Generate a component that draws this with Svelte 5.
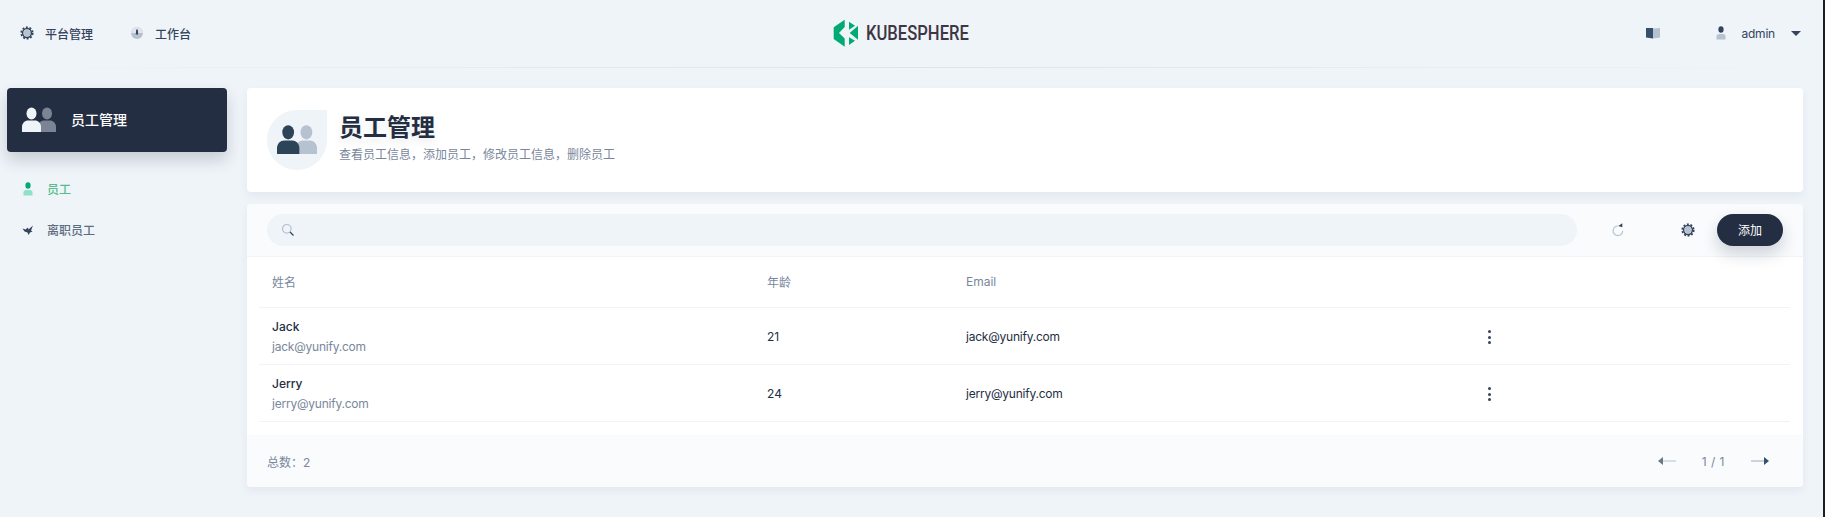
<script>
  const rows = [
    { name: 'Jack', email: 'jack@yunify.com', age: 21 },
    { name: 'Jerry', email: 'jerry@yunify.com', age: 24 },
  ]
</script>

{#snippet gear(size)}
  <svg width={size} height={size} viewBox="0 0 16 16">
    <circle cx="8" cy="8" r="3.2" fill="#b6c2d0" />
    <circle cx="8" cy="8" r="4.4" fill="none" stroke="#36435c" stroke-width="1.5" />
    <circle cx="8" cy="8" r="5.8" fill="none" stroke="#36435c" stroke-width="1.6" stroke-dasharray="2 1.64" />
  </svg>
{/snippet}

{#snippet users(size, front, back)}
  <svg width={size} height={size} viewBox="0 0 34 28">
    <ellipse cx="25" cy="7.5" rx="5" ry="6" fill={back} />
    <path d="M16 26v-5c0-4 3-6.500 6-6.500h6c3 0 6 2.500 6 6.500v5z" fill={back} />
    <ellipse cx="9.500" cy="7.500" rx="5" ry="6" fill={front} />
    <path d="M0 26v-5c0-4 3-6.500 6-6.500h7c3 0 6 2.500 6 6.500v5z" fill={front} />
  </svg>
{/snippet}

{#snippet person(head, body)}
  <svg width="12" height="14" viewBox="0 0 12 14">
    <ellipse cx="6" cy="3.500" rx="2.600" ry="3.200" fill={head} />
    <path d="M1.500 13.500v-3c0-1.600 1-2.500 2.500-2.500h4c1.500 0 2.500 .9 2.500 2.500v3z" fill={body} />
  </svg>
{/snippet}

<div class="screen">
  <div class="page">
    <header class="topbar">
      <nav class="top-links">
        <span class="top-link">
          {@render gear(16)}
          平台管理
        </span>
        <span class="top-link">
          <svg width="16" height="16" viewBox="0 0 16 16">
            <circle cx="8" cy="8" r="6" fill="#b6c2d0" />
            <path d="M2 8a6 6 0 0 1 12 0z" fill="#dfe5ec" />
            <path d="M7.200 4.500h1.600l.4 5h-2.400z" fill="#36435c" />
          </svg>
          工作台
        </span>
      </nav>
      <div class="logo">
        <svg width="25" height="28" viewBox="0 0 25 28">
          <path d="M.7 8.300 11.700 .7V8L6 14l5.700 5.500v8.200L.7 20z" fill="#00aa72" />
          <path d="M16 2.700 22 6.700l-6 4zM25 6.700 16.700 14 25 20.700zM16 18.300l6 3.400-6 4.300z" fill="#00aa72" />
        </svg>
        <span class="logo-text">KUBESPHERE</span>
      </div>
      <div class="top-right">
        <svg class="book" width="14" height="12" viewBox="0 0 14 12">
          <path d="M0 1h7v10.500L0 10.500z" fill="#36506b" />
          <path d="M7 1.500 14 1v9.500l-7 1z" fill="#b6c2d0" />
        </svg>
        <span class="user">
          {@render person('#36435c', '#b6c2d0')}
          <span>admin</span>
          <i class="caret"></i>
        </span>
      </div>
    </header>

    <div class="layout">
      <aside class="sidebar">
        <div class="side-head">
          {@render users(34, '#eff4f9', '#7b8494')}
          <span>员工管理</span>
        </div>
        <ul class="side-nav">
          <li class="active">
            {@render person('#00aa72', '#90e0c5')}
            员工
          </li>
          <li>
            <svg width="12" height="12" viewBox="0 0 12 12">
              <path d="M.5 4.500 3.500 5.500 6 3.500 6.500 5.500 11 1.500 9 6.500 10.500 7.500 8 8.500 6.500 11 5.500 8.500 2.500 7.500z" fill="#36435c" />
            </svg>
            离职员工
          </li>
        </ul>
      </aside>

      <main class="content">
        <section class="banner">
          <div class="banner-icon">{@render users(40, '#2d4358', '#b6c2d0')}</div>
          <div class="banner-text">
            <h1>员工管理</h1>
            <p>查看员工信息，添加员工，修改员工信息，删除员工</p>
          </div>
        </section>

        <section class="panel">
          <div class="toolbar">
            <div class="search">
              <svg width="14" height="14" viewBox="0 0 14 14">
                <circle cx="5.800" cy="5.800" r="4.300" fill="none" stroke="#b6c2d0" stroke-width="1.200" />
                <path d="M9 9l3.500 3.500" stroke="#36435c" stroke-width="1.300" />
              </svg>
            </div>
            <button class="icon-btn refresh" aria-label="刷新">
              <svg width="14" height="14" viewBox="0 0 14 14">
                <path d="M11.700 7.700A4.800 4.800 0 1 1 7.300 3" fill="none" stroke="#b6c2d0" stroke-width="1.200" />
                <path d="M7.300 3 11.300 .3V4.300z" fill="#36435c" />
              </svg>
            </button>
            <button class="icon-btn" aria-label="设置">{@render gear(16)}</button>
            <button class="add">添加</button>
          </div>

          <div class="table">
            <div class="tr th">
              <span>姓名</span>
              <span>年龄</span>
              <span>Email</span>
              <span></span>
            </div>
            {#each rows as row}
              <div class="tr">
                <div class="cell-name">
                  <div class="name">{row.name}</div>
                  <div class="sub email">{row.email}</div>
                </div>
                <span>{row.age}</span>
                <span class="email">{row.email}</span>
                <span class="more"><i></i><i></i><i></i></span>
              </div>
            {/each}
          </div>

          <footer class="foot">
            <span>总数：2</span>
            <div class="pager">
              <svg width="18" height="10" viewBox="0 0 18 10">
                <path d="M5 5h13" stroke="#c8d2dc" stroke-width="1.400" />
                <path d="M0 5l5-4v8z" fill="#6b7888" />
              </svg>
              <span class="pages">1 / 1</span>
              <svg width="18" height="10" viewBox="0 0 18 10">
                <path d="M0 5h13" stroke="#b6c2d0" stroke-width="1.400" />
                <path d="M18 5l-5-4v8z" fill="#36506b" />
              </svg>
            </div>
          </footer>
        </section>
      </main>
    </div>
  </div>
  <div class="edge"></div>
</div>

<style>
  :global(*, *::before, *::after) {
    box-sizing: border-box;
    margin: 0;
    padding: 0;
  }

  :global(body) {
    background: #eff4f9;
    color: #242e42;
    font-family: Inter, 'Noto Sans CJK SC', sans-serif;
    font-size: 12px;
    overflow: hidden;
  }

  .screen {
    display: flex;
    height: 517px;
  }

  .page {
    flex: 1;
    min-width: 0;
  }

  .edge {
    width: 2px;
    background: #1e1e1c;
  }

  .topbar {
    position: relative;
    display: grid;
    grid-template-columns: 1fr auto 1fr;
    align-items: center;
    height: 68px;
    padding: 0 22px 2px 19px;
  }

  .topbar::after {
    content: '';
    position: absolute;
    left: 0;
    right: 0;
    bottom: 0;
    height: 1px;
    background: linear-gradient(90deg, transparent, #dde3ea 50%, transparent);
  }

  .top-links {
    display: flex;
    gap: 36px;
  }

  .top-link {
    display: flex;
    align-items: center;
    gap: 10px;
    color: #36435c;
    font-weight: 500;
  }

  .logo {
    display: flex;
    align-items: center;
    gap: 8px;
    margin-left: -20px;
  }

  .logo-text {
    display: inline-block;
    width: 101px;
    font-family: Roboto, sans-serif;
    font-size: 20px;
    font-weight: 500;
    color: #3e3644;
    transform: scaleX(0.83);
    transform-origin: left center;
    white-space: nowrap;
  }

  .top-right {
    display: flex;
    justify-content: flex-end;
    align-items: center;
    gap: 55px;
  }

  .user {
    display: flex;
    align-items: center;
    color: #36435c;
  }

  .user span {
    margin: 0 16px 0 14px;
    letter-spacing: -0.2px;
  }

  .caret {
    border-top: 5px solid #36435c;
    border-left: 5px solid transparent;
    border-right: 5px solid transparent;
  }

  .layout {
    display: flex;
    padding-top: 20px;
  }

  .sidebar {
    flex: none;
    width: 247px;
    padding: 0 20px 0 7px;
  }

  .side-head {
    display: flex;
    align-items: center;
    gap: 15px;
    height: 64px;
    padding-left: 15px;
    background: #242e42;
    border-radius: 4px;
    box-shadow: 0 8px 16px rgba(36, 46, 66, 0.2);
    color: #fff;
    font-size: 14px;
    font-weight: 500;
  }

  .side-head span {
    padding-bottom: 2px;
  }

  .side-nav {
    list-style: none;
    margin-top: 16px;
  }

  .side-nav li {
    display: flex;
    align-items: center;
    gap: 13px;
    height: 41px;
    padding-left: 15px;
    color: #5f6c81;
    font-weight: 500;
  }

  .side-nav li.active {
    color: #55bc8a;
  }

  .content {
    flex: 1;
    min-width: 0;
    padding-right: 20px;
  }

  .banner {
    display: flex;
    align-items: center;
    gap: 12px;
    height: 104px;
    padding-left: 20px;
    background: #fff;
    border-radius: 4px;
    box-shadow: 0 4px 8px rgba(36, 46, 66, 0.06);
  }

  .banner-icon {
    display: flex;
    align-items: center;
    justify-content: center;
    width: 60px;
    height: 60px;
    background: #eff4f9;
    border-radius: 50% 0 50% 50%;
  }

  .banner-text {
    padding-bottom: 4px;
  }

  h1 {
    font-size: 24px;
    line-height: 30px;
    font-weight: 600;
    color: #242e42;
    text-shadow: 0 4px 8px rgba(36, 46, 66, 0.1);
  }

  .banner p {
    margin-top: 3px;
    line-height: 18px;
    color: #79879c;
  }

  .panel {
    margin-top: 12px;
    background: #fff;
    border-radius: 4px;
    box-shadow: 0 4px 8px rgba(36, 46, 66, 0.06);
    overflow: hidden;
  }

  .toolbar {
    display: flex;
    align-items: center;
    height: 53px;
    padding: 0 20px;
    background: #f9fbfd;
    border-bottom: 1px solid #eff4f9;
  }

  .search {
    display: flex;
    align-items: center;
    flex: none;
    width: 1310px;
    height: 32px;
    padding-left: 14px;
    background: #eff4f9;
    border-radius: 16px;
  }

  .icon-btn {
    display: flex;
    align-items: center;
    justify-content: center;
    flex: none;
    width: 16px;
    height: 16px;
    margin-left: 54px;
    background: none;
    border: 0;
  }

  .refresh {
    margin-left: 33px;
  }

  .add {
    flex: none;
    width: 66px;
    height: 32px;
    margin-left: 21px;
    padding-bottom: 2px;
    background: #242e42;
    border: 0;
    border-radius: 16px;
    box-shadow: 0 8px 16px rgba(36, 46, 66, 0.2);
    color: #fff;
    font-family: inherit;
    font-size: 12px;
  }

  .table {
    padding: 0 13px 13px 12px;
  }

  .tr {
    display: grid;
    grid-template-columns: 495px 199px 522px 1fr;
    align-items: center;
    height: 57px;
    padding-left: 13px;
    border-bottom: 1px solid #eff4f9;
  }

  .th {
    height: 51px;
    color: #79879c;
    padding-bottom: 2px;
  }

  .cell-name {
    padding-top: 1px;
  }

  .name {
    font-weight: 500;
    line-height: 20px;
  }

  .sub {
    line-height: 20px;
    color: #79879c;
  }

  .email {
    letter-spacing: -0.22px;
  }

  .more {
    display: flex;
    flex-direction: column;
    gap: 2.500px;
    width: 3px;
    margin-top: 2px;
  }

  .more i {
    width: 3px;
    height: 3px;
    border-radius: 50%;
    background: #36435c;
  }

  .foot {
    display: flex;
    align-items: center;
    justify-content: space-between;
    height: 52px;
    padding: 0 34px 0 20px;
    background: #f9fbfd;
    color: #79879c;
  }

  .pager {
    display: flex;
    align-items: center;
    gap: 26px;
  }

  .pages {
    letter-spacing: 0.5px;
  }
</style>
